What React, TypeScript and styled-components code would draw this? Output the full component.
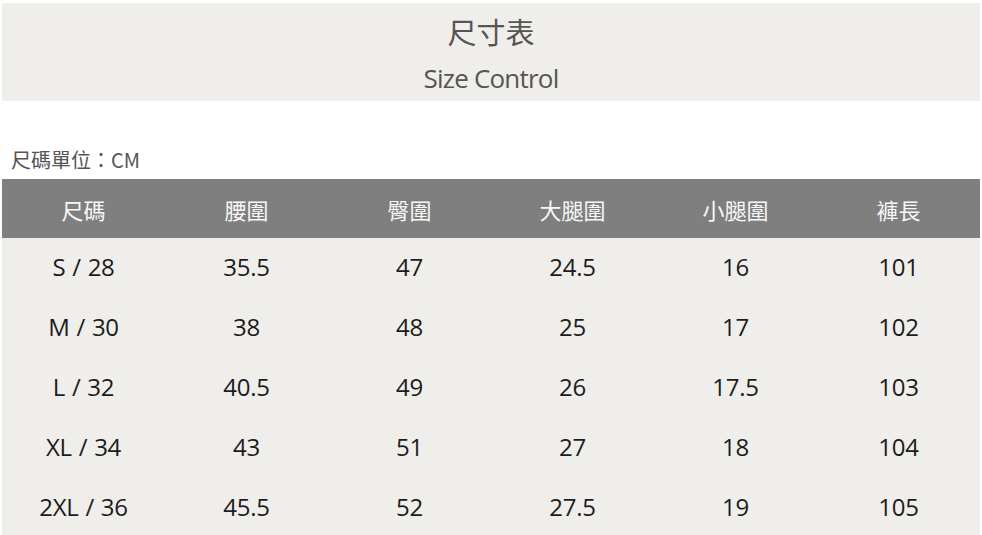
import styled, { createGlobalStyle } from 'styled-components';

const GlobalStyle = createGlobalStyle`
  html, body {
    margin: 0;
    padding: 0;
    background: #ffffff;
  }
`;

const Page = styled.div`
  width: 982px;
  padding: 3px 2px 0 2px;
  box-sizing: border-box;
  font-family: 'Open Sans', 'Noto Sans CJK TC', sans-serif;
`;

const Banner = styled.header`
  height: 98px;
  background-color: #f0eeea;
  display: flex;
  flex-direction: column;
  align-items: center;
`;

const Title = styled.h1`
  margin: 11px 0 0;
  font-family: 'Noto Sans CJK TC', sans-serif;
  font-size: 29px;
  font-weight: 400;
  line-height: 34px;
  color: #555555;
`;

const SubTitle = styled.div`
  margin-top: 15px;
  font-family: 'Open Sans', sans-serif;
  font-size: 26px;
  line-height: 30px;
  color: #555555;
  letter-spacing: -0.8px;
`;

const Unit = styled.div`
  margin: 46px 0 0 9px;
  height: 32px;
  font-family: 'Noto Sans CJK TC', sans-serif;
  font-size: 20px;
  line-height: 26px;
  color: #555555;
`;

const Table = styled.div`
  display: grid;
  grid-template-columns: repeat(6, 163px);
  width: 978px;
`;

const HeadCell = styled.div`
  height: 59px;
  background-color: #7f7f7f;
  color: #f7f7f7;
  display: flex;
  align-items: center;
  justify-content: center;
  font-family: 'Noto Sans CJK TC', sans-serif;
  font-size: 22px;
`;

const Cell = styled.div`
  height: 60px;
  padding-bottom: 4px;
  box-sizing: border-box;
  background-color: #f0eeea;
  color: #1c1c1c;
  display: flex;
  align-items: center;
  justify-content: center;
  font-family: 'Open Sans', sans-serif;
  font-size: 24px;
  font-weight: 500;
  letter-spacing: -0.3px;
  word-spacing: 1px;
  white-space: pre;
`;

const headers = ['尺碼', '腰圍', '臀圍', '大腿圍', '小腿圍', '褲長'];

const rows = [
  ['S / 28', '35.5', '47', '24.5', '16', '101'],
  ['M / 30', '38', '48', '25', '17', '102'],
  ['L / 32', '40.5', '49', '26', '17.5', '103'],
  ['XL / 34', '43', '51', '27', '18', '104'],
  ['2XL / 36', '45.5', '52', '27.5', '19', '105'],
];

const App = () => {
  return (
    <Page>
      <GlobalStyle />
      <Banner>
        <Title>尺寸表</Title>
        <SubTitle>Size Control</SubTitle>
      </Banner>
      <Unit>尺碼單位：CM</Unit>
      <Table>
        {headers.map((h) => (
          <HeadCell key={h}>{h}</HeadCell>
        ))}
        {rows.map((row) =>
          row.map((v, i) => <Cell key={row[0] + i}>{v}</Cell>)
        )}
      </Table>
    </Page>
  );
};

export default App;
